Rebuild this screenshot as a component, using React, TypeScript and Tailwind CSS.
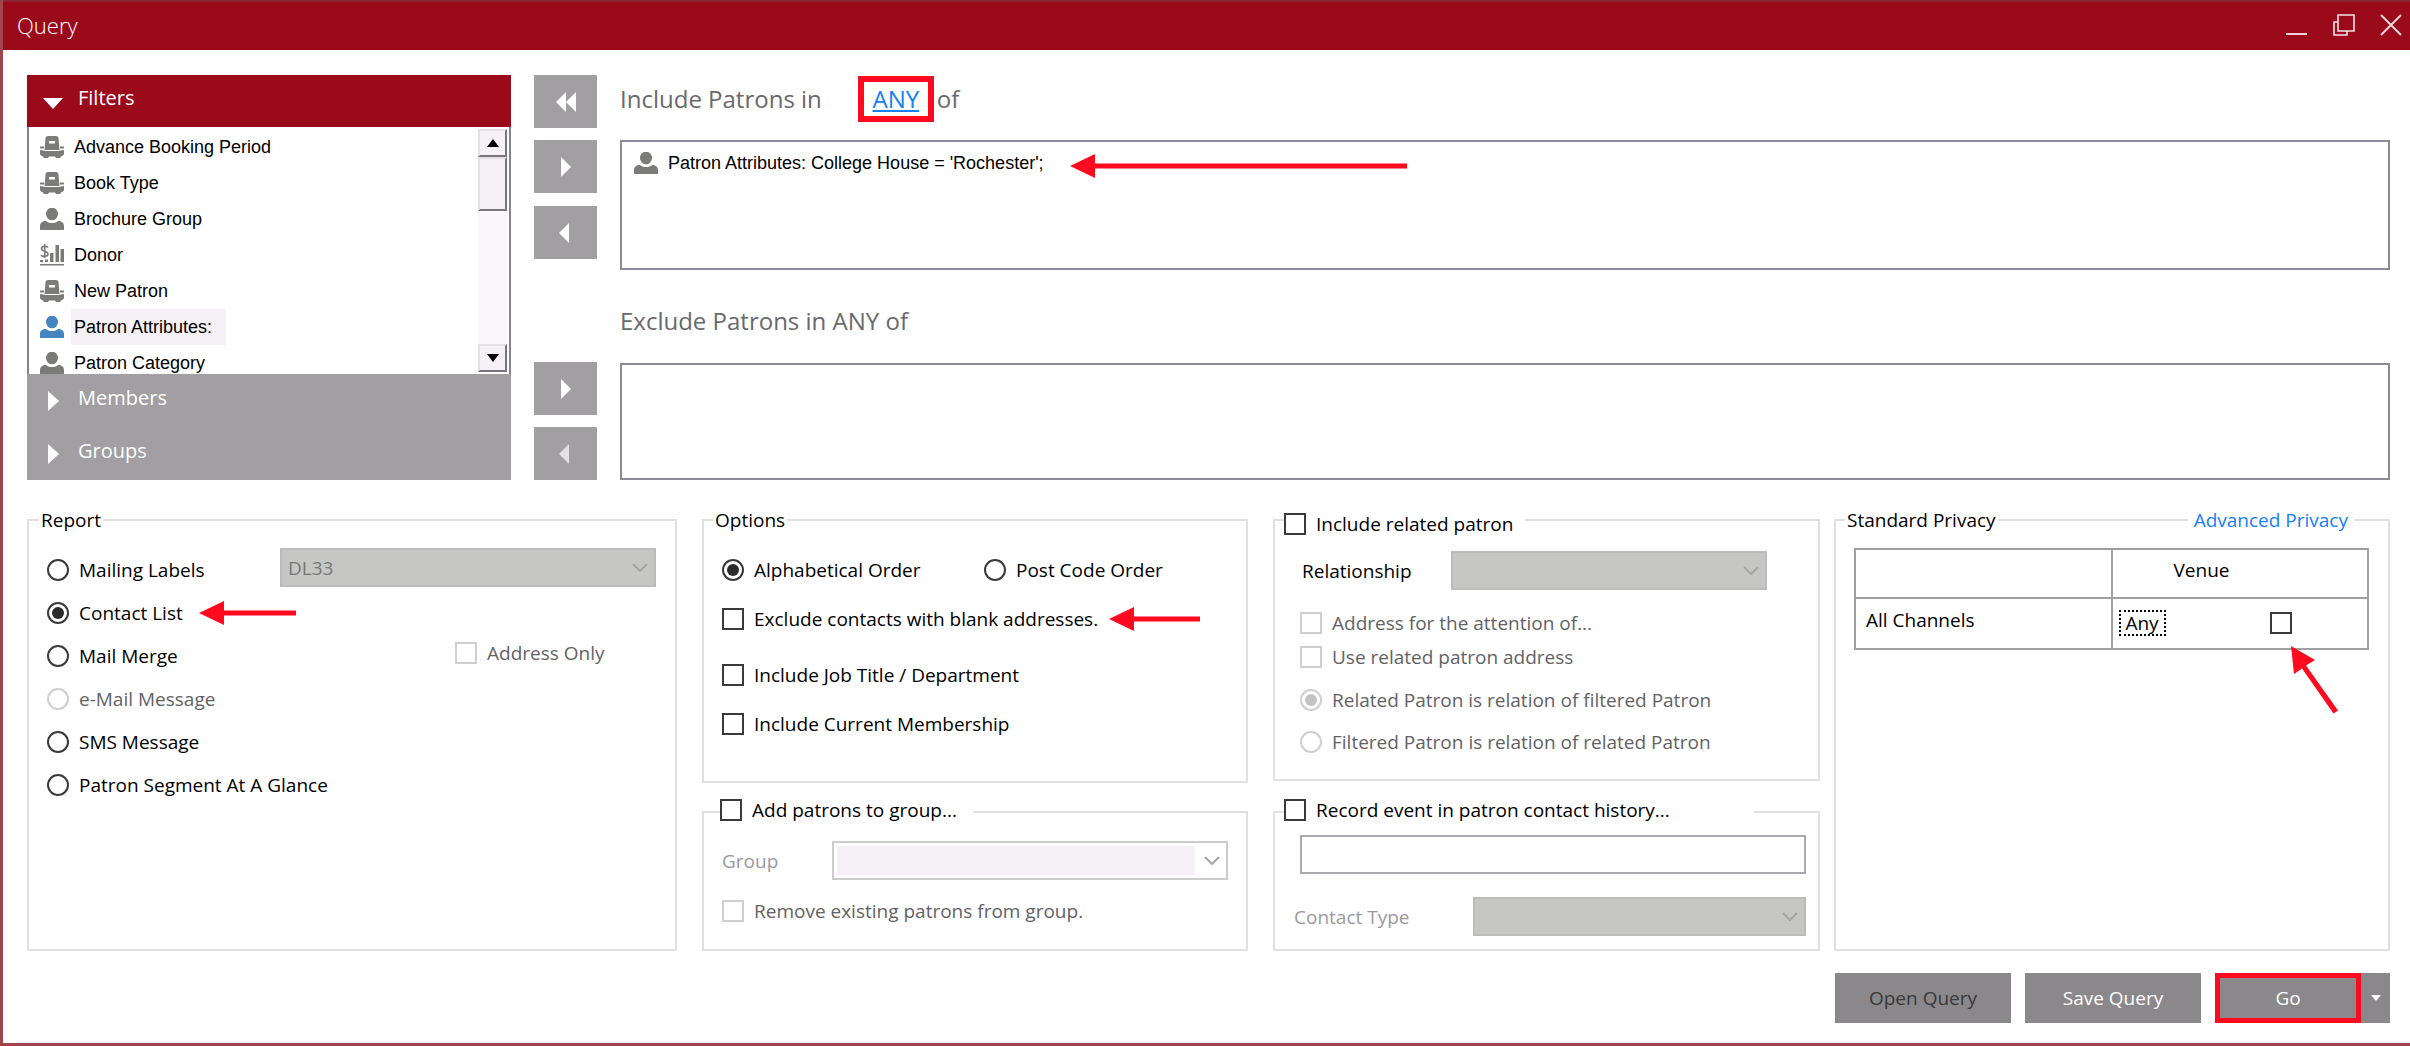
import { ReactNode } from 'react';
import clsx from 'clsx';

type IconKind = 'seat' | 'person' | 'donor';

interface FilterItem {
  label: string;
  icon: IconKind;
  selected?: boolean;
}

const filters: FilterItem[] = [
  { label: 'Advance Booking Period', icon: 'seat' },
  { label: 'Book Type', icon: 'seat' },
  { label: 'Brochure Group', icon: 'person' },
  { label: 'Donor', icon: 'donor' },
  { label: 'New Patron', icon: 'seat' },
  { label: 'Patron Attributes:', icon: 'person', selected: true },
  { label: 'Patron Category', icon: 'person' },
];

function ItemIcon({ kind, className }: { kind: IconKind; className?: string }) {
  return (
    <svg viewBox="0 0 24 22" className={clsx('h-[22px] w-6 shrink-0', className)} fill="currentColor" aria-hidden="true">
      {kind === 'person' && (
        <>
          <ellipse cx="12" cy="6" rx="6" ry="6.300" />
          <path d="M0 22v-4c0-3.500 2.500-5 6-5 1.500 1.500 3.500 2 6 2s4.500-.5 6-2c3.500 0 6 1.500 6 5v4z" />
        </>
      )}
      {kind === 'seat' && (
        <>
          <path fillRule="evenodd" d="M8 0h8c1.500 0 2.300 1 2.500 2.500L19.500 14h-15L5.500 2.500C5.700 1 6.500 0 8 0zM9 5v2.500h6V5z" />
          <path d="M0 10.500h4v2H0zM20 10.500h4v2h-4zM0 14c3 0 4 1 6 1h12c2 0 3-1 6-1v3.500c0 1.500-1 2.500-2.500 2.500L20 22h-4l-1-1.500H9L8 22H4l-1.500-2C1 20 0 19 0 17.500z" />
        </>
      )}
      {kind === 'donor' && (
        <>
          <path d="M8 3.500C7 2 1.500 1.500 1.500 4.500S8 7 8 10s-6 3-7 1M4.700 0v14" fill="none" stroke="currentColor" strokeWidth="1.600" />
          <path d="M0 16h3v2H0zM5 15.500h3V18H5zM10 9h3.500v9H10zM15.500 1H19v17h-3.500zM20.500 5H24v13h-3.500zM0 20h24v1.600H0z" />
        </>
      )}
    </svg>
  );
}

function Chevron({ className }: { className?: string }) {
  return (
    <svg viewBox="0 0 16 10" className={clsx('h-[10px] w-4', className)} fill="none" stroke="currentColor" strokeWidth="2" aria-hidden="true">
      <path d="M1 1l7 7 7-7" />
    </svg>
  );
}

function Arrow({ length, className }: { length: number; className?: string }) {
  return (
    <svg width={length} height="24" className={clsx('shrink-0', className)} fill="#ff0a1e" aria-hidden="true">
      <path d={`M0 12L25 0V9.500H${length}V14.500H25V24z`} />
    </svg>
  );
}

const LEFT = 'M14 0v20L4 10z';
const RIGHT = 'M6 0v20l10-10z';

function MoveButton({ label, path, dim, className }: { label: string; path: string; dim?: boolean; className?: string }) {
  return (
    <button type="button" aria-label={label} className={clsx('flex h-[53px] w-full items-center justify-center bg-[#a19fa2]', className)}>
      <svg viewBox="0 0 22 20" className="h-5 w-[22px]" fill={dim ? '#e3dfe5' : 'white'} aria-hidden="true">
        <path d={path} />
      </svg>
    </button>
  );
}

interface ChoiceProps {
  type: 'radio' | 'checkbox';
  label: string;
  name?: string;
  checked?: boolean;
  disabled?: boolean;
  className?: string;
}

function Choice({ type, label, name, checked, disabled, className }: ChoiceProps) {
  return (
    <label className={clsx('flex h-7 items-center gap-[10px] whitespace-nowrap', disabled && 'text-[#626266]', className)}>
      <input
        type={type}
        name={name}
        defaultChecked={checked}
        disabled={disabled}
        className={clsx(
          'flex size-[22px] shrink-0 appearance-none items-center justify-center border-2 bg-white',
          type === 'radio' && "rounded-full checked:before:size-3 checked:before:rounded-full checked:before:content-['']",
          disabled ? 'border-[#cfcfcf] checked:before:bg-[#c4c5c3]' : 'border-[#3a3a3a] checked:before:bg-[#2b2b2b]',
        )}
      />
      <span>{label}</span>
    </label>
  );
}

function DropDown({ label, value, light, className }: { label: string; value?: string; light?: boolean; className?: string }) {
  return (
    <div className={clsx('relative', className)}>
      <select
        aria-label={label}
        disabled
        className={clsx(
          'block h-[39px] w-full appearance-none border-2 pl-[6px] text-[#77777a] opacity-100',
          light ? 'border-[#cccccc] bg-white' : 'border-[#bbbcbb] bg-[#c6c7c5]',
        )}
      >
        <option>{value}</option>
      </select>
      {light && <div className="absolute inset-y-[5px] left-[5px] right-[33px] bg-[#f5f1f7]" />}
      <Chevron className="absolute right-2 top-[15px] text-[#a5a5a7]" />
    </div>
  );
}

function Group({ legend, legendClass, className, children }: { legend: ReactNode; legendClass?: string; className?: string; children: ReactNode }) {
  return (
    <fieldset className={clsx('min-w-0 border-2 border-[#e0e0e0]', className)}>
      <legend className={clsx('leading-[26px]', legendClass)}>{legend}</legend>
      {children}
    </fieldset>
  );
}

function TitleBar() {
  return (
    <header className="flex h-[50px] items-center justify-between border-t-2 border-[#8a2430] bg-[#9a0a1b] pb-[2px] pl-[14px] pr-2 text-white">
      <h1 className="text-[22px] font-light">Query</h1>
      <div className="flex gap-[25px]">
        <button type="button" aria-label="Minimize">
          <svg className="size-[22px]" viewBox="0 0 22 22" stroke="#f0d5d8" strokeWidth="2"><path d="M0 20h21" /></svg>
        </button>
        <button type="button" aria-label="Restore">
          <svg className="size-[22px]" viewBox="0 0 22 22" fill="none" stroke="#f6e4e6" strokeWidth="1.600"><path d="M5 1h16v16H5zM5 8H1v13h13v-4" /></svg>
        </button>
        <button type="button" aria-label="Close">
          <svg className="size-[22px]" viewBox="0 0 22 22" stroke="#f0d5d8" strokeWidth="2"><path d="M1 1l20 20M21 1L1 21" /></svg>
        </button>
      </div>
    </header>
  );
}

function ScrollBar() {
  const raised = 'border-2 border-b-[#77757a] border-l-[#e4e0e6] border-r-[#77757a] border-t-[#e4e0e6] bg-[#f5f1f7]';
  return (
    <div className="flex w-[29px] flex-col bg-[#f9f7fa]">
      <button type="button" aria-label="Scroll up" className={clsx('flex h-7 items-center justify-center', raised)}>
        <svg className="h-2 w-3" viewBox="0 0 12 8"><path d="M6 0l6 8H0z" /></svg>
      </button>
      <div className={clsx('h-[54px]', raised)} />
      <button type="button" aria-label="Scroll down" className={clsx('mt-auto flex h-7 items-center justify-center', raised)}>
        <svg className="h-2 w-3" viewBox="0 0 12 8"><path d="M0 0h12L6 8z" /></svg>
      </button>
    </div>
  );
}

function FilterPanel() {
  return (
    <aside className="flex w-[484px] shrink-0 flex-col text-[20px] text-white">
      <button type="button" className="flex h-[52px] items-center bg-[#9a0a1b] pl-4 text-left">
        <svg className="mt-1 h-[11px] w-5" viewBox="0 0 20 11" fill="white" aria-hidden="true"><path d="M0 0h20L10 11z" /></svg>
        <span className="mb-[6px] ml-[15px]">Filters</span>
      </button>
      <div className="flex h-[247px] justify-between overflow-hidden border-x-2 border-[#85838f] bg-white py-[2px] pr-[2px]">
        <ul className="pl-[11px] font-['Liberation_Sans',sans-serif] text-[18px] text-black">
          {filters.map((item) => (
            <li key={item.label} className="flex h-9 items-center gap-[7px]">
              <ItemIcon kind={item.icon} className={item.selected ? 'text-[#4585c0]' : 'text-[#7b7c7a]'} />
              <span className={clsx('flex h-9 items-center pl-[3px]', item.selected && 'bg-[#f5f1f7] pr-[14px]')}>{item.label}</span>
            </li>
          ))}
        </ul>
        <ScrollBar />
      </div>
      {['Members', 'Groups'].map((name) => (
        <button key={name} type="button" className="flex h-[53px] items-center bg-[#a19fa2] pl-[21px] text-left">
          <svg className="h-5 w-[11px]" viewBox="0 0 11 20" fill="white" aria-hidden="true"><path d="M0 0l11 10L0 20z" /></svg>
          <span className="mb-[6px] ml-[19px]">{name}</span>
        </button>
      ))}
    </aside>
  );
}

function PatronLists() {
  return (
    <div className="min-w-0 grow text-[24px] text-[#69696d]">
      <div className="mb-[18px] flex h-[47px] items-center whitespace-nowrap">
        <h2>Include Patrons in</h2>
        <a href="#any" className="ml-9 flex h-[46px] w-[76px] items-center justify-center border-[6px] border-[#ff0a1e] text-[#1580f5] underline">ANY</a>
        <span className="ml-[3px]">of</span>
      </div>
      <div className="h-[130px] border-2 border-[#8b8a97] pl-3 pt-[9px] font-['Liberation_Sans',sans-serif] text-[18px] text-black">
        <div className="flex h-6 items-center">
          <ItemIcon kind="person" className="text-[#7b7c7a]" />
          <span className="ml-[10px] whitespace-nowrap">Patron Attributes: College House = 'Rochester';</span>
          <Arrow length={337} className="ml-[26px] mt-[6px]" />
        </div>
      </div>
      <h2 className="flex h-[93px] items-center pt-2">Exclude Patrons in ANY of</h2>
      <div className="h-[117px] border-2 border-[#8b8a97]" />
    </div>
  );
}

function ReportGroup() {
  return (
    <Group legend="Report" className="mt-1 h-[444px] pl-[18px] pr-[19px]" legendClass="-ml-2 px-[2px]">
      <div className="grid grid-cols-[233px_1fr] pt-[15px]">
        <div className="flex flex-col">
          <Choice type="radio" name="report" label="Mailing Labels" className="h-[43px]" />
          <div className="flex items-center">
            <Choice type="radio" name="report" label="Contact List" checked className="h-[43px]" />
            <Arrow length={97} className="ml-4" />
          </div>
          <Choice type="radio" name="report" label="Mail Merge" className="h-[43px]" />
          <Choice type="radio" name="report" label="e-Mail Message" disabled className="h-[43px]" />
          <Choice type="radio" name="report" label="SMS Message" className="h-[43px]" />
          <Choice type="radio" name="report" label="Patron Segment At A Glance" className="h-[43px]" />
        </div>
        <div>
          <DropDown label="Label format" value="DL33" />
          <Choice type="checkbox" label="Address Only" disabled className="ml-[175px] mt-[52px]" />
        </div>
      </div>
    </Group>
  );
}

function OptionsGroup() {
  return (
    <Group legend="Options" className="h-[276px] px-[18px]" legendClass="-ml-[9px] px-[2px]">
      <div className="pt-[23px]">
        <div className="flex">
          <Choice type="radio" name="order" label="Alphabetical Order" checked className="w-[262px]" />
          <Choice type="radio" name="order" label="Post Code Order" />
        </div>
        <div className="mt-[21px] flex items-center">
          <Choice type="checkbox" label="Exclude contacts with blank addresses." />
          <Arrow length={91} className="ml-[11px]" />
        </div>
        <Choice type="checkbox" label="Include Job Title / Department" className="mt-7" />
        <Choice type="checkbox" label="Include Current Membership" className="mt-[21px]" />
      </div>
    </Group>
  );
}

function AddToGroup() {
  return (
    <Group
      legend={<Choice type="checkbox" label="Add patrons to group..." />}
      legendClass="-ml-[2px] h-[32px] pr-4"
      className="h-[155px] px-[18px]"
    >
      <div className="flex items-center pt-[13px]">
        <span className="w-[110px] text-[#9b9a9f]">Group</span>
        <DropDown label="Group" light className="grow" />
      </div>
      <Choice type="checkbox" label="Remove existing patrons from group." disabled className="mt-[17px]" />
    </Group>
  );
}

function RelatedPatron() {
  return (
    <Group
      legend={<Choice type="checkbox" label="Include related patron" />}
      legendClass="-ml-4 h-[34px] pr-3 pt-[7px]"
      className="h-[278px] pl-[25px] pr-[51px]"
    >
      <div className="flex items-center pt-[14px]">
        <span className="w-[151px] pl-[2px]">Relationship</span>
        <DropDown label="Relationship" className="grow" />
      </div>
      <Choice type="checkbox" label="Address for the attention of..." disabled className="mt-[19px]" />
      <Choice type="checkbox" label="Use related patron address" disabled className="mt-[6px]" />
      <Choice type="radio" name="relation" label="Related Patron is relation of filtered Patron" checked disabled className="mt-[15px]" />
      <Choice type="radio" name="relation" label="Filtered Patron is relation of related Patron" disabled className="mt-[14px]" />
    </Group>
  );
}

function RecordEvent() {
  return (
    <Group
      legend={<Choice type="checkbox" label="Record event in patron contact history..." />}
      legendClass="-ml-[10px] h-[32px] pr-[84px]"
      className="h-[155px] pl-[19px] pr-3"
    >
      <div className="pl-[6px] pt-[7px]">
        <input type="text" aria-label="Event" className="block h-[39px] w-full border-2 border-[#a9a9ae] px-2" />
      </div>
      <div className="mt-[23px] flex items-center">
        <span className="w-[179px] text-[#9b9a9f]">Contact Type</span>
        <DropDown label="Contact Type" className="grow" />
      </div>
    </Group>
  );
}

function Privacy() {
  return (
    <div className="relative mt-1">
      <Group legend="Standard Privacy" className="h-[444px] pl-[18px] pr-[19px]" legendClass="-ml-[9px] px-[2px]">
        <table className="mt-[15px] w-full table-fixed border-collapse text-left [&_td]:border-2 [&_th]:border-2 [&_td]:border-[#a09fa2] [&_th]:border-[#a09fa2]">
          <thead>
            <tr className="h-[49px]">
              <td />
              <th scope="col" className="pb-2 pl-[61px] font-normal">Venue</th>
            </tr>
          </thead>
          <tbody>
            <tr className="h-[51px]">
              <th scope="row" className="pb-2 pl-[10px] font-normal">All Channels</th>
              <td>
                <div className="relative flex items-center pb-[2px] pl-[6px]">
                  <button type="button" className="h-[26px] w-[47px] border-2 border-dotted border-black leading-[22px]">Any</button>
                  <input type="checkbox" aria-label="Any venue, all channels" className="ml-[104px] size-[22px] appearance-none border-2 border-[#3a3a3a] bg-white" />
                  <svg className="absolute left-[178px] top-9 h-[70px] w-[48px]" viewBox="0 0 48 70" fill="#ff0a1e" aria-hidden="true">
                    <path d="M0 0l24 14-9 5.500 32 45-4.500 3L11 22.500 3 28z" />
                  </svg>
                </div>
              </td>
            </tr>
          </tbody>
        </table>
      </Group>
      <a href="#advanced-privacy" className="absolute right-[36px] top-0 bg-white px-[6px] leading-[26px] text-[#1580f5]">Advanced Privacy</a>
    </div>
  );
}

export default function App() {
  return (
    <div className="min-h-screen border-b-[3px] border-l-[3px] border-[#a0444e] bg-white font-['Open_Sans','Noto_Sans',sans-serif] text-[19px] leading-[26px] text-black">
      <TitleBar />
      <main className="pb-5 pl-6 pr-5 pt-[25px]">
        <section className="flex">
          <FilterPanel />
          <div className="mx-[23px] w-[63px] shrink-0">
            <MoveButton label="Remove all" path="M11 0v20L1 10zM21 0v20L11 10z" />
            <MoveButton label="Include" path={RIGHT} className="mt-3" />
            <MoveButton label="Remove include" path={LEFT} className="mt-[13px]" />
            <MoveButton label="Exclude" path={RIGHT} className="mt-[103px]" />
            <MoveButton label="Remove exclude" path={LEFT} dim className="mt-3" />
          </div>
          <PatronLists />
        </section>

        <section className="mt-[23px] grid grid-cols-[650fr_546fr_1117fr] gap-[25px]">
          <ReportGroup />
          <div className="mt-1 flex flex-col gap-[13px]">
            <OptionsGroup />
            <AddToGroup />
          </div>
          <div className="grid grid-cols-[547fr_556fr] gap-[14px]">
            <div className="flex flex-col gap-[15px]">
              <RelatedPatron />
              <RecordEvent />
            </div>
            <Privacy />
          </div>
        </section>

        <footer className="mt-[22px] flex h-[50px] justify-end text-white">
          <button type="button" className="mr-[14px] w-[176px] bg-[#8a888b] text-[#38383a]">Open Query</button>
          <button type="button" className="mr-[14px] w-[176px] bg-[#8a888b]">Save Query</button>
          <button type="button" className="w-[146px] border-[5px] border-[#ff0a1e] bg-[#8a888b]">Go</button>
          <button type="button" aria-label="More go actions" className="flex w-[29px] items-center justify-center bg-[#8a888b]">
            <svg className="h-[6px] w-[10px]" viewBox="0 0 10 6" fill="white"><path d="M0 0h10L5 6z" /></svg>
          </button>
        </footer>
      </main>
    </div>
  );
}
